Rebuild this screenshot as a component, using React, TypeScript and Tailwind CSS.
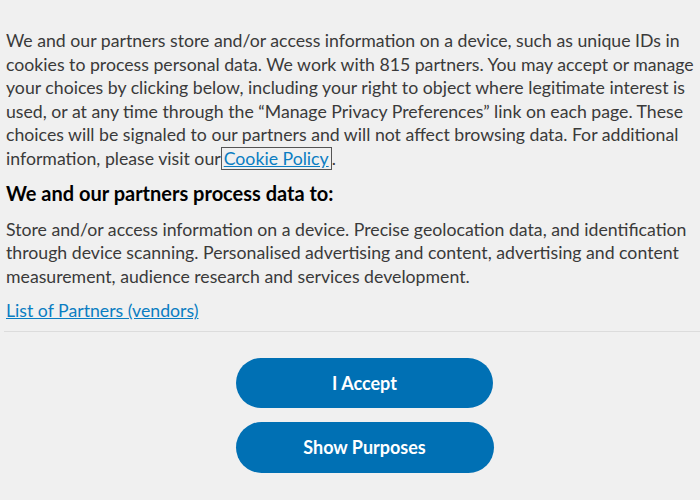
export default function App() {
  return (
    <div
      className="w-[700px] h-[500px] overflow-hidden bg-[#f0f0f0] text-[#3a3a3a]"
      style={{ fontFamily: "Lato, 'Noto Sans', sans-serif" }}
    >
      <div className="px-[6px] pt-[29px]">
        <p className="text-[17.7px] leading-[23.6px]">
          We and our partners store and/or access information on a device, such as unique IDs in
          cookies to process personal data. We work with 815 partners. You may accept or manage
          your choices by clicking below, including your right to object where legitimate interest
          is used, or at any time through the “Manage Privacy Preferences” link on each page. These
          choices will be signaled to our partners and will not affect browsing data. For additional
          information, please visit our
          <a className="border border-[#555] text-[#0a7dc2] underline px-[2px]">Cookie Policy</a>.
        </p>
        <h2 className="mt-[10px] text-[20px] font-bold text-black leading-[25px]">
          We and our partners process data to:
        </h2>
        <p className="mt-[12px] text-[17.7px] leading-[23.6px]">
          Store and/or access information on a device. Precise geolocation data, and identification
          through device scanning. Personalised advertising and content, advertising and content
          measurement, audience research and services development.
        </p>
        <a className="mt-[11px] block text-[17.7px] leading-[24px] text-[#0a7dc2] underline">
          List of Partners (vendors)
        </a>
      </div>
      <div className="ml-[4px] mt-[8px] border-t border-[#dcdcdc]" />
      <div className="flex flex-col items-center gap-[14px] pt-[26px] pl-[29px]">
        <button className="w-[257px] h-[50px] rounded-full bg-[#0070b4] text-white text-[18px] font-bold">
          I Accept
        </button>
        <button className="w-[258px] h-[51px] rounded-full bg-[#0070b4] text-white text-[18px] font-bold">
          Show Purposes
        </button>
      </div>
    </div>
  );
}
